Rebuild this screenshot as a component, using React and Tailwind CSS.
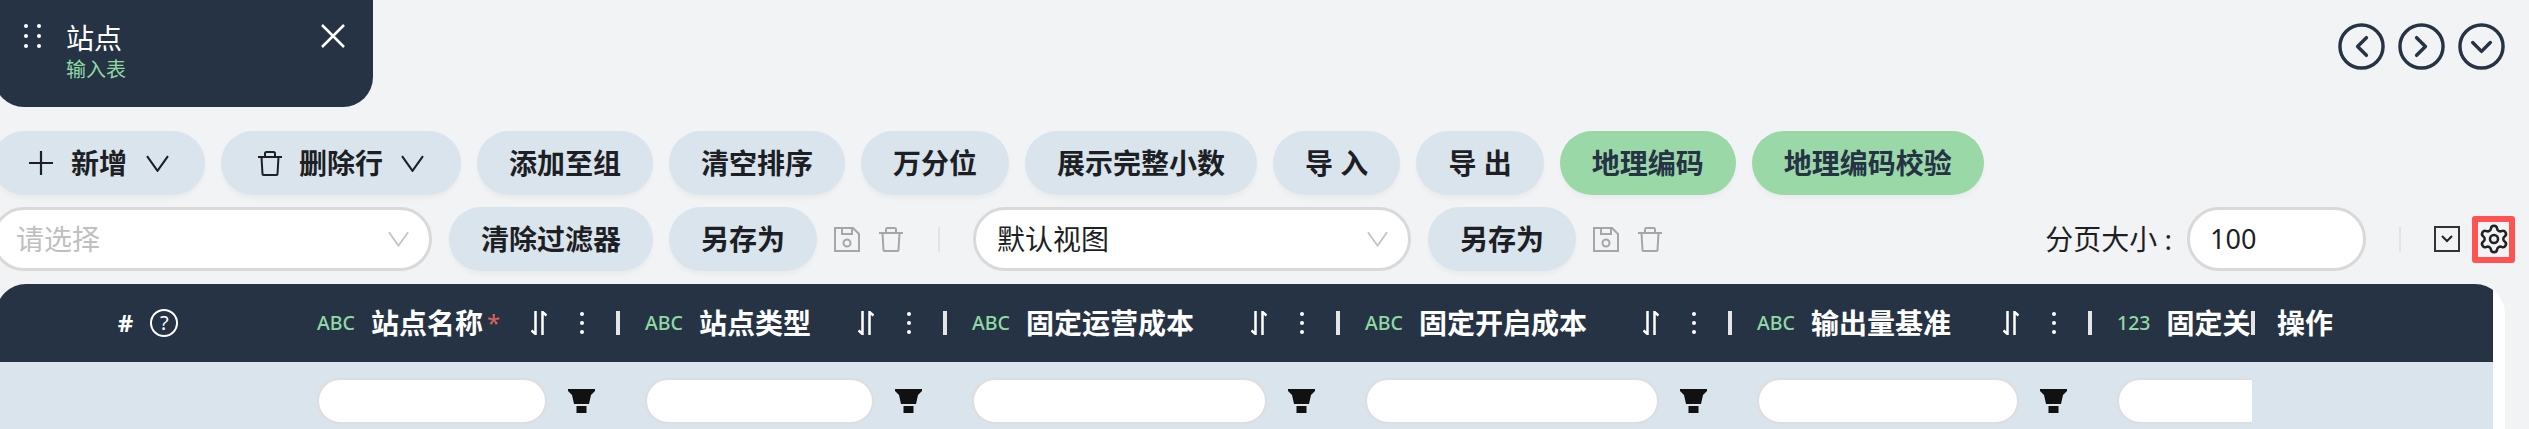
import { Settings } from "lucide-react";

const columns = [
  { title: "站点名称", type: "ABC", required: true, width: "w-[328px]" },
  { title: "站点类型", type: "ABC", width: "w-[327px]" },
  { title: "固定运营成本", type: "ABC", width: "w-[393px]" },
  { title: "固定开启成本", type: "ABC", width: "w-[392px]" },
  { title: "输出量基准", type: "ABC", width: "w-[360px]" },
];

function Chevron({ className = "w-[22px] h-[16px]" }) {
  return (
    <svg className={className} viewBox="0 0 22 16" fill="none" stroke="currentColor" strokeWidth="2">
      <path d="M1 1l10 14L21 1" />
    </svg>
  );
}

function Trash({ className = "" }) {
  return (
    <svg className={`w-[24px] h-[25px] shrink-0 ${className}`} viewBox="0 0 24 25" fill="none" stroke="currentColor" strokeWidth="2">
      <path d="M0 6h24M7 6V2.5Q7 1 8.5 1h7Q17 1 17 2.5V6M3.5 6l1 17q0 1 1 1h13q1 0 1-1l1-17" />
    </svg>
  );
}

function Save() {
  return (
    <svg className="w-[26px] h-[25px] shrink-0 text-[#a6a6a6]" viewBox="0 0 26 25" fill="none" stroke="currentColor" strokeWidth="2">
      <path d="M1 1h18l6 6v17H1zM8 1v6h10V1" />
      <circle cx="13" cy="16" r="3.5" />
    </svg>
  );
}

function Btn({ children, green }) {
  return (
    <button
      className={`h-[64px] shrink-0 rounded-full px-[32px] flex items-center font-bold text-[28px] shadow-[0_4px_4px_rgba(0,0,0,0.03)] ${
        green ? "bg-[#9ad8a8] text-[#263345]" : "bg-[#d9e4ed] text-[#1d1f24]"
      }`}
    >
      {children}
    </button>
  );
}

function Select({ text, placeholder, width }) {
  return (
    <div className={`${width} h-[64px] shrink-0 rounded-full bg-white border-[3px] border-[#d9d9d9] flex items-center text-[28px] pl-[21px] pr-[20px]`}>
      <span className={placeholder ? "text-[#bfbfbf]" : "text-[#1d1f24]"}>{text}</span>
      <Chevron className="ml-auto w-[21px] h-[22px] text-[#c4c4c4]" />
    </div>
  );
}

function RoundNav({ d }) {
  return (
    <svg className="w-[47px] h-[47px]" viewBox="0 0 48 48" fill="none" stroke="#263345" strokeWidth="3.5" strokeLinecap="round" strokeLinejoin="round">
      <circle cx="24" cy="24" r="22" />
      <path d={d} />
    </svg>
  );
}

function HeaderRight() {
  return (
    <div className="ml-auto flex items-center">
      <svg className="w-[16px] h-[24px]" viewBox="0 0 16 24" fill="none" stroke="white" strokeWidth="2.5">
        <path d="M4.5 0v23L.5 19.5M11.5 24V1L15.5 4.5" />
      </svg>
      <span className="ml-[33px] flex flex-col gap-[5px]">
        <i className="w-[4px] h-[4px] rounded-full bg-white" />
        <i className="w-[4px] h-[4px] rounded-full bg-white" />
        <i className="w-[4px] h-[4px] rounded-full bg-white" />
      </span>
      <i className="ml-[32px] mr-[1px] w-[4px] h-[24px] bg-[#e5e5e5]" />
    </div>
  );
}

function Funnel() {
  return (
    <svg className="w-[27px] h-[24px] shrink-0" viewBox="0 0 27 24" fill="#111">
      <path d="M0 0h27v2l-4 4-2 9H6L4 6 0 2z" />
      <rect x="8.5" y="17" width="10" height="7" />
    </svg>
  );
}

export default function App() {
  return (
    <div className="w-[2529px] h-[429px] overflow-hidden bg-[#f1f3f5] text-[#1d1f24] font-['Noto_Sans','Noto_Sans_CJK_SC',sans-serif]">
      {/* tab + nav arrows */}
      <div className="flex items-start justify-between h-[131px] pr-[24px]">
        <div className="-ml-[6px] w-[379px] h-[107px] rounded-b-[30px] bg-[#263345] flex items-start pl-[30px] pr-[28px] text-white">
          <svg className="w-[18px] h-[24px] mt-[24px] shrink-0" viewBox="0 0 18 24" fill="white">
            <circle cx="2" cy="2" r="2" />
            <circle cx="15" cy="2" r="2" />
            <circle cx="2" cy="12" r="2" />
            <circle cx="15" cy="12" r="2" />
            <circle cx="2" cy="22" r="2" />
            <circle cx="15" cy="22" r="2" />
          </svg>
          <div className="ml-[24px] mt-[20px] flex flex-col">
            <span className="text-[28px] leading-[37px]">站点</span>
            <span className="text-[20px] leading-[26px] text-[#8fd9a3]">输入表</span>
          </div>
          <svg className="ml-auto mt-[24px] w-[24px] h-[24px]" viewBox="0 0 24 24" fill="none" stroke="white" strokeWidth="2.5">
            <path d="M1 1l22 22M23 1L1 23" />
          </svg>
        </div>
        <div className="flex gap-[13px] pt-[23px]">
          <RoundNav d="M29 15l-9 9 9 9" />
          <RoundNav d="M19 15l9 9-9 9" />
          <RoundNav d="M15 20l9 9 9-9" />
        </div>
      </div>

      {/* action buttons */}
      <div className="-ml-[8px] flex gap-[16px]">
        <Btn>
          <svg className="w-[24px] h-[24px] ml-[5px] mr-[18px]" viewBox="0 0 24 24" fill="none" stroke="currentColor" strokeWidth="2.2">
            <path d="M12 0v24M0 12h24" />
          </svg>
          新增
          <Chevron className="ml-[19px] mr-[4px] w-[23px] h-[17px]" />
        </Btn>
        <Btn>
          <Trash className="ml-[5px] mr-[17px]" />
          删除行
          <Chevron className="ml-[18px] mr-[5px] w-[23px] h-[17px]" />
        </Btn>
        <Btn>添加至组</Btn>
        <Btn>清空排序</Btn>
        <Btn>万分位</Btn>
        <Btn>展示完整小数</Btn>
        <Btn>导 入</Btn>
        <Btn>导 出</Btn>
        <Btn green>地理编码</Btn>
        <Btn green>地理编码校验</Btn>
      </div>

      {/* filters / views */}
      <div className="-ml-[8px] mt-[12px] flex items-center pr-[14px]">
        <Select text="请选择" placeholder width="w-[440px]" />
        <div className="ml-[17px] flex gap-[16px]">
          <Btn>清除过滤器</Btn>
          <Btn>另存为</Btn>
        </div>
        <div className="ml-[17px] flex items-center gap-[19px] text-[#a6a6a6]">
          <Save />
          <Trash />
        </div>
        <i className="ml-[35px] mr-[33px] w-[2px] h-[25px] bg-[#e3e3e3]" />
        <Select text="默认视图" width="w-[438px]" />
        <div className="ml-[17px]">
          <Btn>另存为</Btn>
        </div>
        <div className="ml-[17px] flex items-center gap-[19px] text-[#a6a6a6]">
          <Save />
          <Trash />
        </div>
        <div className="ml-auto flex items-center">
          <span className="text-[28px]">分页大小 :</span>
          <div className="ml-[15px] w-[179px] h-[64px] rounded-full bg-white border-[3px] border-[#d9d9d9] flex items-center pl-[20px] text-[27px]">
            100
          </div>
          <i className="ml-[33px] w-[2px] h-[25px] bg-[#e3e3e3]" />
          <div className="ml-[33px] w-[26px] h-[26px] border-2 border-[#333] flex items-center justify-center">
            <svg className="w-[12px] h-[8px]" viewBox="0 0 12 8" fill="none" stroke="#222" strokeWidth="2">
              <path d="M1 1l5 5 5-5" />
            </svg>
          </div>
          <div className="ml-[12px] w-[43px] h-[47px] border-[6px] border-[#ff5252] rounded-[3px] flex items-center justify-center">
            <Settings className="w-[32px] h-[32px] shrink-0 text-[#222]" strokeWidth={1.9} />
          </div>
        </div>
      </div>

      {/* table */}
      <div className="-ml-[4px] mt-[13px] w-[2509px] pr-[12px] bg-white rounded-t-[30px] overflow-hidden">
        <div className="flex h-[78px] bg-[#263345] text-white">
          <div className="w-[297px] shrink-0 flex items-center justify-center gap-[17px] pl-[7px]">
            <span className="text-[24px] font-bold">#</span>
            <span className="w-[28px] h-[28px] rounded-full border-2 border-white flex items-center justify-center text-[20px]">?</span>
          </div>
          {columns.map((c) => (
            <div key={c.title} className={`${c.width} shrink-0 flex items-center pl-[24px]`}>
              <span className="text-[19.5px] font-medium text-[#8fd9a3] mr-[16px]">{c.type}</span>
              <span className="text-[28px] font-bold whitespace-nowrap">{c.title}</span>
              {c.required && <span className="ml-[4px] text-[24px] text-[#d9625f]">*</span>}
              <HeaderRight />
            </div>
          ))}
          <div className="w-[162px] shrink-0 flex items-center pl-[24px]">
            <span className="text-[19.5px] font-medium text-[#8fd9a3] mr-[16px]">123</span>
            <span className="text-[28px] font-bold whitespace-nowrap">固定关</span>
            <i className="ml-auto w-[4px] h-[24px] bg-[#e5e5e5]" />
          </div>
          <div className="flex-1 flex items-center pl-[22px]">
            <span className="text-[28px] font-bold">操作</span>
          </div>
        </div>
        <div className="flex h-[78px] bg-[#d9e4ed]">
          <div className="w-[297px] shrink-0" />
          {columns.map((c) => (
            <div key={c.title} className={`${c.width} shrink-0 flex items-center gap-[21px] pl-[24px] pr-[26px]`}>
              <div className="flex-1 h-[46px] rounded-full bg-white border-2 border-[#dedede]" />
              <Funnel />
            </div>
          ))}
          <div className="w-[162px] shrink-0 flex items-center pl-[24px]">
            <div className="w-[135px] overflow-hidden">
              <div className="w-[230px] h-[46px] rounded-full bg-white border-2 border-[#dedede]" />
            </div>
          </div>
        </div>
      </div>
    </div>
  );
}
